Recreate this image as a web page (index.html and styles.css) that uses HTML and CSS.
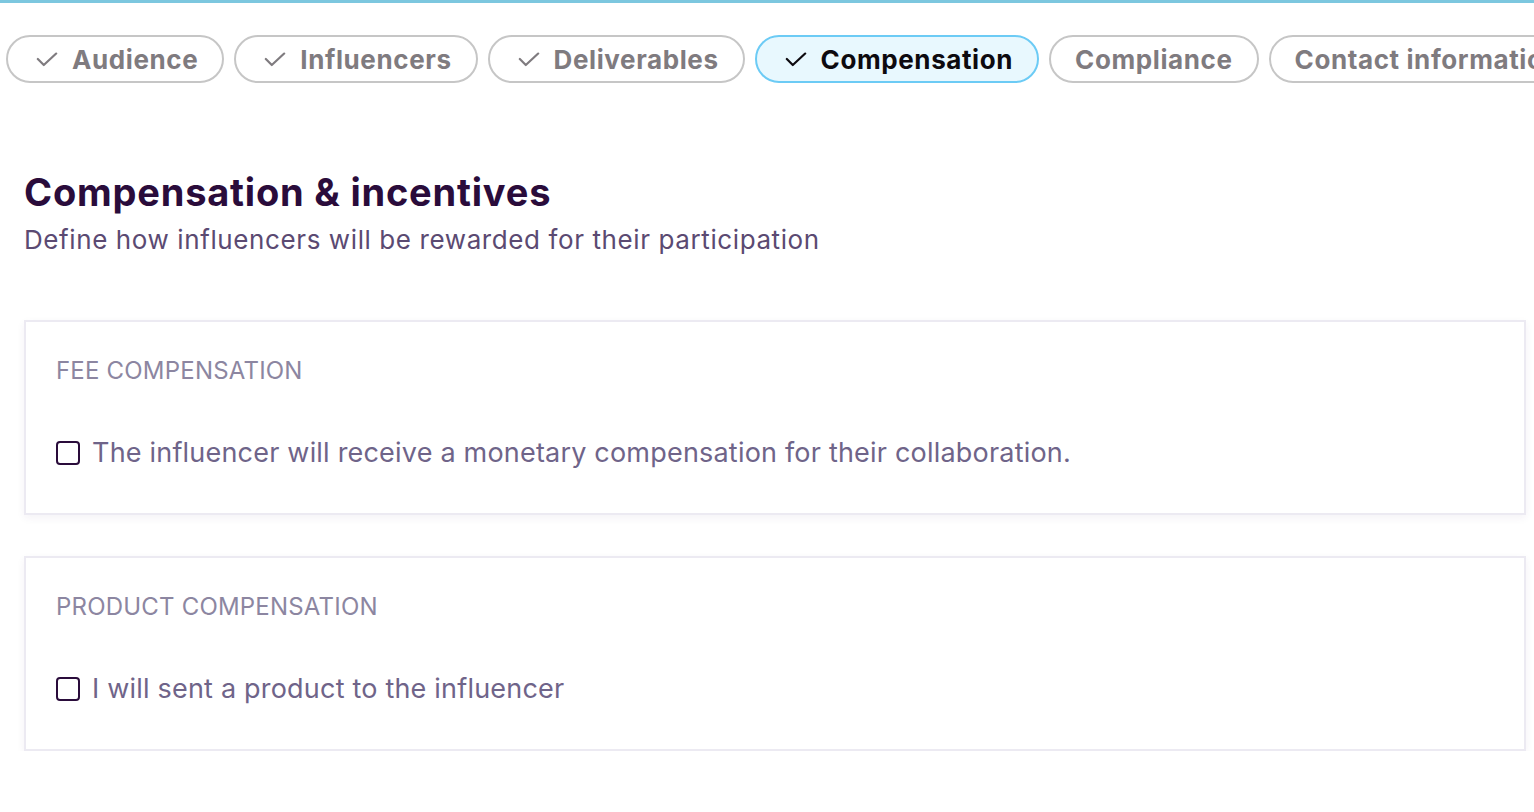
FILE: index.html
```html
<!DOCTYPE html>
<html>
<head>
<meta charset="utf-8">
<link rel="stylesheet" href="styles.css">
</head>
<body>
<div class="topbar"></div>
<nav class="tabs">
  <div class="tab done"><svg class="check" viewBox="0 0 24 16"><path d="M2 7.5 L8.5 14 L22 1.5"/></svg><span>Audience</span></div>
  <div class="tab done"><svg class="check" viewBox="0 0 24 16"><path d="M2 7.5 L8.5 14 L22 1.5"/></svg><span>Influencers</span></div>
  <div class="tab done"><svg class="check" viewBox="0 0 24 16"><path d="M2 7.5 L8.5 14 L22 1.5"/></svg><span>Deliverables</span></div>
  <div class="tab done active"><svg class="check" viewBox="0 0 24 16"><path d="M2 7.5 L8.5 14 L22 1.5"/></svg><span>Compensation</span></div>
  <div class="tab"><span>Compliance</span></div>
  <div class="tab"><span>Contact information</span></div>
</nav>
<main class="content">
  <h1 class="title">Compensation &amp; incentives</h1>
  <p class="subtitle">Define how influencers will be rewarded for their participation</p>
  <section class="card">
    <h2 class="card-label">FEE COMPENSATION</h2>
    <label class="option"><span class="box"></span><span>The influencer will receive a monetary compensation for their collaboration.</span></label>
  </section>
  <section class="card">
    <h2 class="card-label">PRODUCT COMPENSATION</h2>
    <label class="option"><span class="box"></span><span>I will sent a product to the influencer</span></label>
  </section>
</main>
</body>
</html>
```
FILE: styles.css
```css
html, body {
  margin: 0;
  padding: 0;
  background: #ffffff;
  font-family: Inter, "Noto Sans", sans-serif;
  overflow: hidden;
}
.topbar {
  height: 3px;
  background: #7cc7df;
}
.tabs {
  display: flex;
  gap: 10px;
  padding: 32px 0 0 6px;
  overflow: hidden;
  white-space: nowrap;
}
.tab {
  flex: none;
  display: flex;
  align-items: center;
  gap: 14px;
  height: 48px;
  box-sizing: border-box;
  padding: 0 24px;
  border: 2px solid #c6c6c6;
  border-radius: 24px;
  font-size: 26px;
  font-weight: 700;
  color: #7f7b7f;
  letter-spacing: 0.6px;
}
.tab.done {
  padding-left: 28px;
}
.check {
  width: 22px;
  height: 15px;
  fill: none;
  stroke: #7f7b7f;
  stroke-width: 2.4;
  stroke-linecap: round;
  stroke-linejoin: round;
}
.tab.active {
  background: #e8f8fe;
  border-color: #6ccbf5;
  color: #0d0a0f;
}
.tab.active .check {
  stroke: #0d0a0f;
}
.content {
  padding: 0 8px 0 24px;
}
.title {
  margin: 87px 0 0;
  font-size: 38px;
  line-height: 44px;
  font-weight: 700;
  color: #2a0c3b;
  letter-spacing: 0.8px;
}
.subtitle {
  margin: 9px 0 0;
  font-size: 26px;
  line-height: 34px;
  color: #5b4a72;
  letter-spacing: 0.6px;
}
.card {
  margin-top: 41px;
  height: 195px;
  box-sizing: border-box;
  padding: 34px 30px 0;
  border: 2px solid #eceaf2;
  box-shadow: 0 3px 8px rgba(60, 40, 110, 0.06);
  background: #fff;
}
.subtitle + .card {
  margin-top: 63px;
}
.card-label {
  margin: 0;
  font-size: 24px;
  line-height: 30px;
  font-weight: 400;
  color: #8c86a1;
  letter-spacing: 0.2px;
}
.option {
  display: flex;
  align-items: center;
  gap: 12px;
  margin-top: 50px;
  font-size: 27px;
  line-height: 34px;
  color: #6f6489;
  letter-spacing: 0.2px;
}
.box {
  flex: none;
  width: 24px;
  height: 24px;
  box-sizing: border-box;
  border: 2px solid #2a0c3b;
  border-radius: 4px;
}
```
